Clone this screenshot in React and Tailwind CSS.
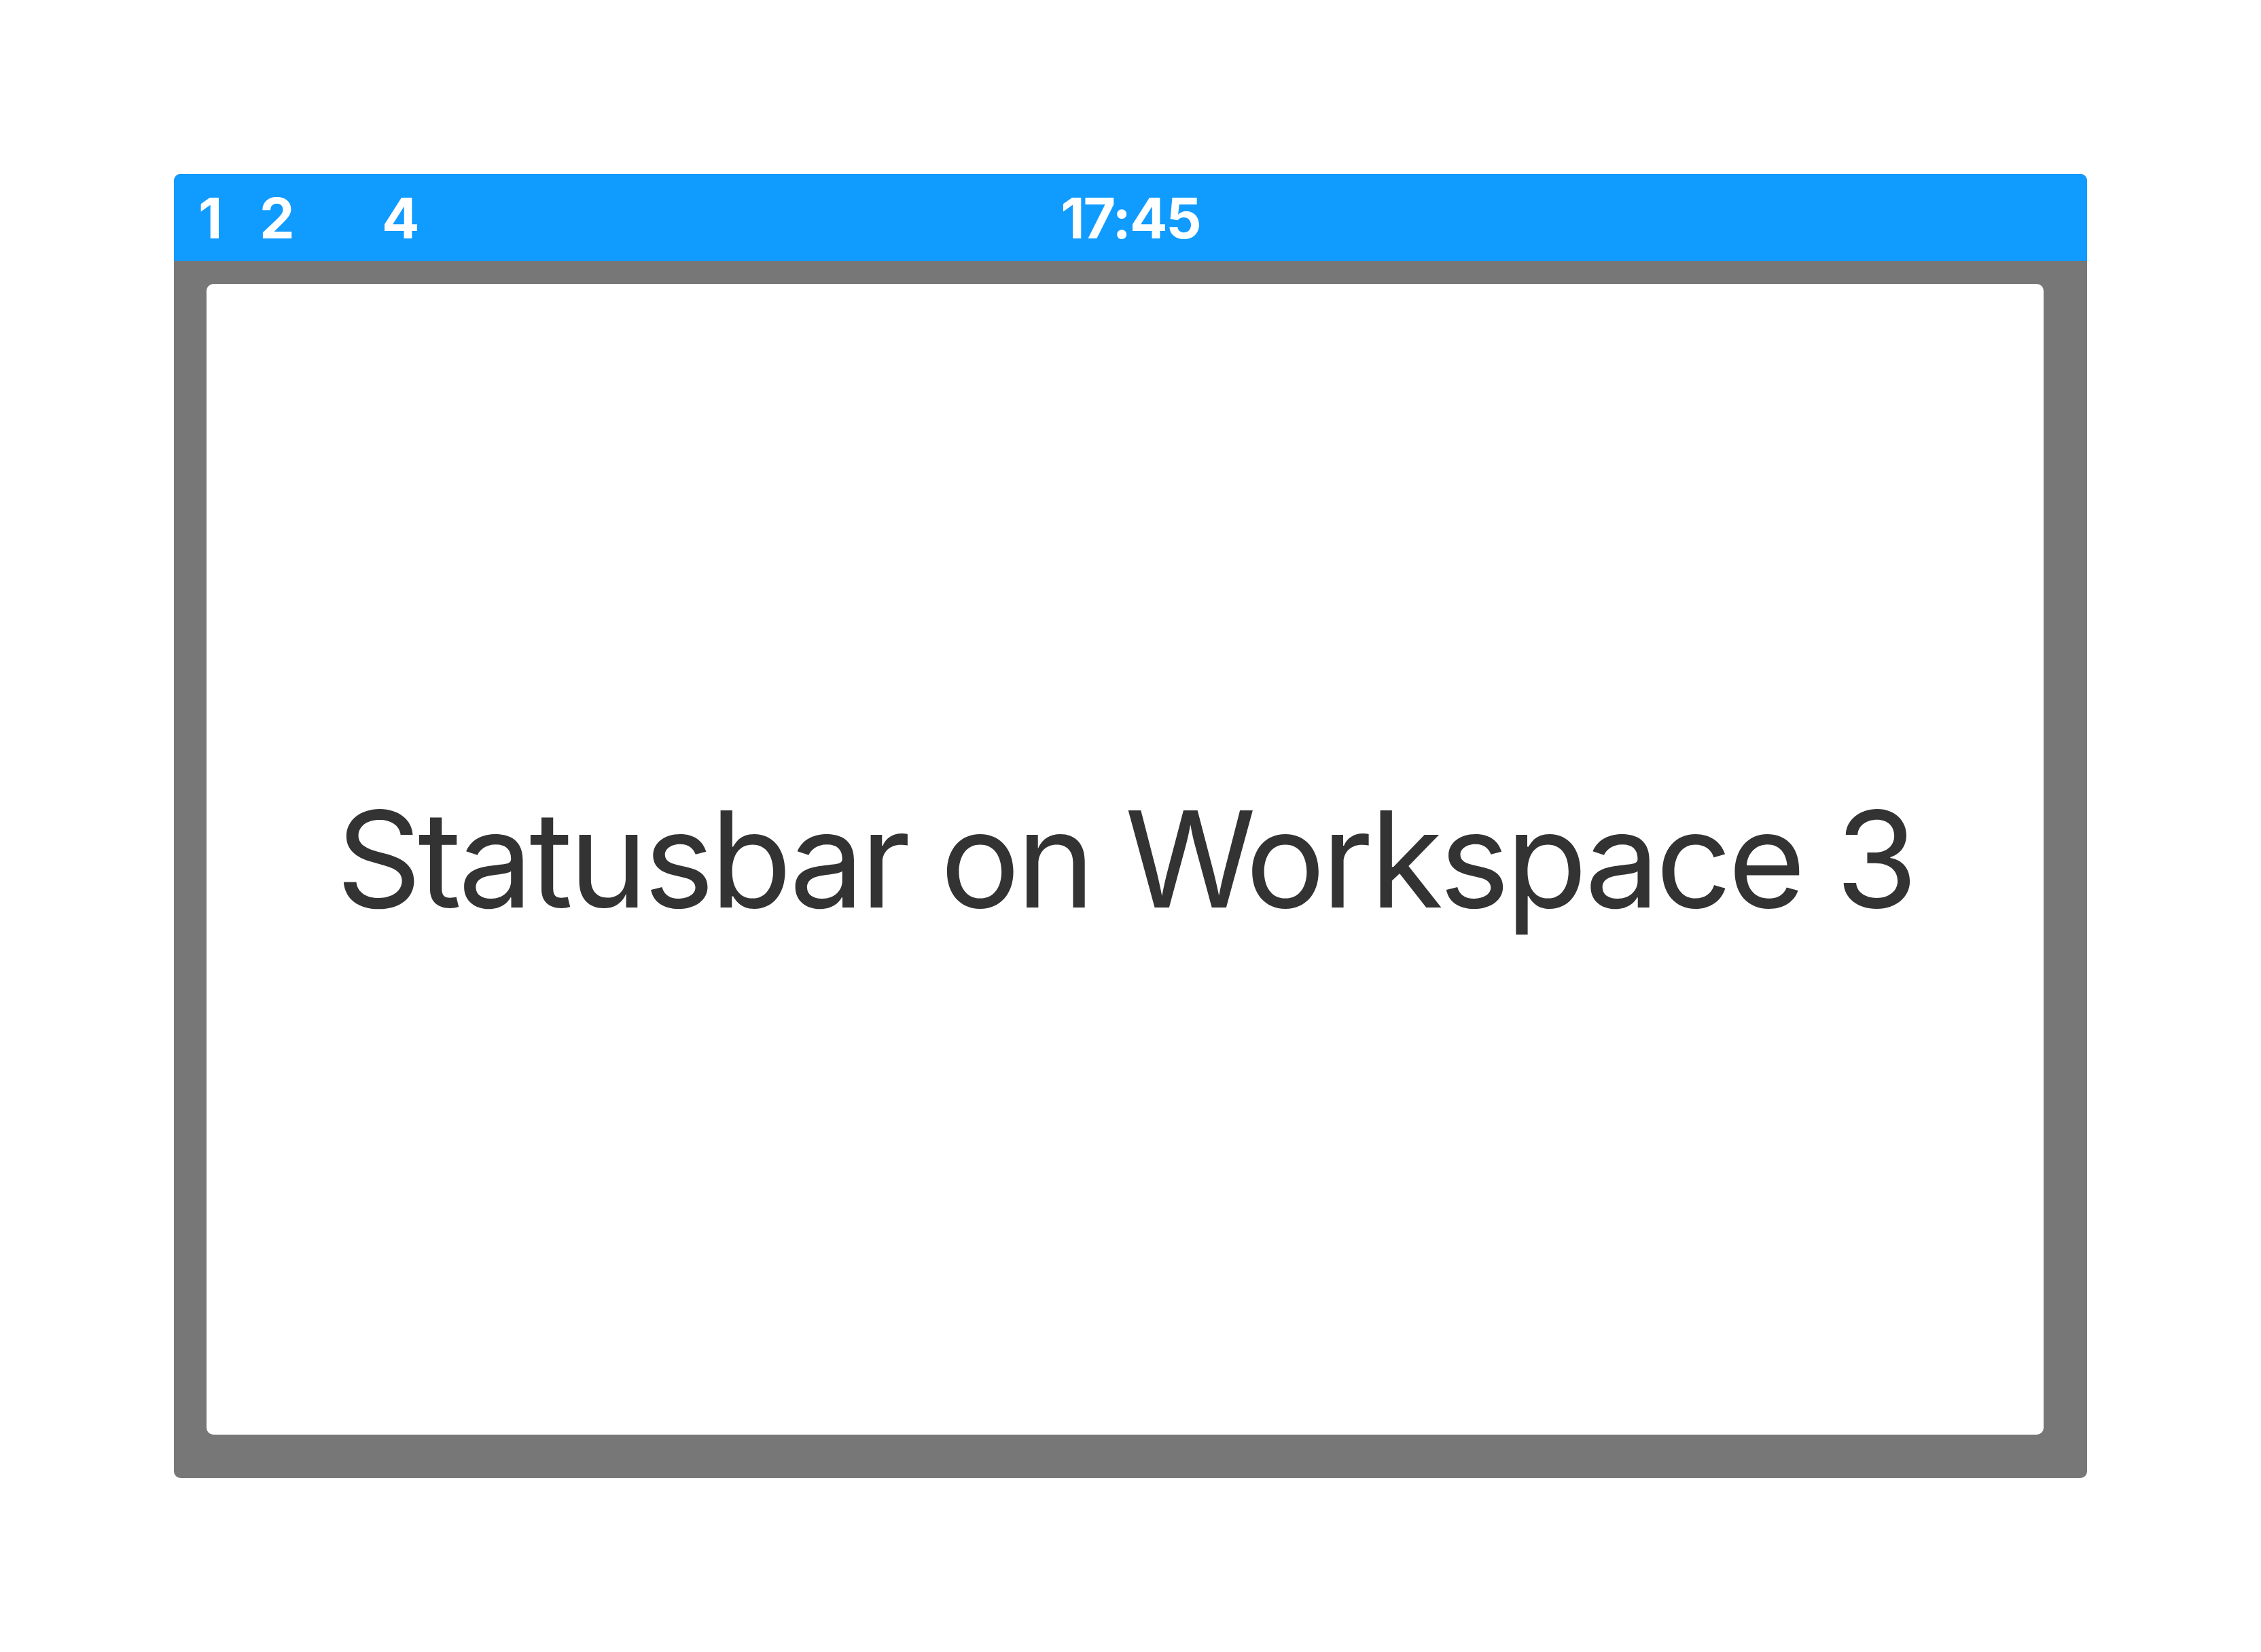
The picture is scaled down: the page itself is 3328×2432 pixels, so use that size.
const workspaces = [1, 2, 3, 4]
const active = 3

export default function App() {
  return (
    <div className="flex h-[2432px] w-[3328px] items-start bg-white pl-[256px] pt-[256px] font-['Inter',sans-serif]">
      <div className="flex h-[1920px] w-[2816px] flex-col overflow-hidden rounded-[10px] bg-[#777777]">
        {/* status bar */}
        <div className="relative flex h-[128px] shrink-0 items-center bg-[#109bff] pl-[36px] pt-[4px] text-[82px] font-bold leading-none tracking-[-2px] text-white">
          {workspaces.map((n) => (
            <span key={n} className={n === active ? 'w-[90px] text-transparent' : 'w-[90px]'}>
              {n}
            </span>
          ))}
          <span className="absolute left-1/2 -translate-x-1/2">17:45</span>
        </div>
        {/* workspace body */}
        <div className="flex flex-1 pb-[64px] pl-[48px] pr-[64px] pt-[34px]">
          <div className="flex flex-1 items-center justify-center rounded-[10px] bg-white">
            <span className="text-[196px] font-normal leading-none tracking-[-5.6px] text-[#333333]">Statusbar on Workspace 3</span>
          </div>
        </div>
      </div>
    </div>
  )
}
